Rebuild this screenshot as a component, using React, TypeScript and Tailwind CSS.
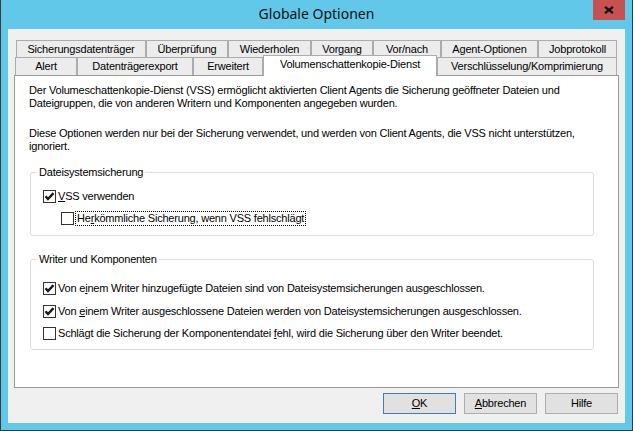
import React from "react";

type TabDef = { label: string; w: string };

const topRow: TabDef[] = [
  { label: "Sicherungsdatenträger", w: "w-[130px]" },
  { label: "Überprüfung", w: "w-[82px]" },
  { label: "Wiederholen", w: "w-[83px]" },
  { label: "Vorgang", w: "w-[62px]" },
  { label: "Vor/nach", w: "w-[68px]" },
  { label: "Agent-Optionen", w: "w-[97px]" },
  { label: "Jobprotokoll", w: "w-[79px]" },
];

const bottomRow: (TabDef & { active?: boolean })[] = [
  { label: "Alert", w: "w-[62px]" },
  { label: "Datenträgerexport", w: "w-[116px]" },
  { label: "Erweitert", w: "w-[70px]" },
  { label: "Volumenschattenkopie-Dienst", w: "w-[174px]", active: true },
  { label: "Verschlüsselung/Komprimierung", w: "w-[180px]" },
];

function Tab({ label, w, active }: TabDef & { active?: boolean }) {
  if (active) {
    return (
      <div
        className={`${w} relative z-10 h-[21px] -mb-[1px] shrink-0 border border-b-0 border-[#acacac] bg-white flex justify-center pt-[2px]`}
      >
        {label}
      </div>
    );
  }
  return (
    <div
      className={`${w} h-full shrink-0 border border-b-0 border-[#acacac] bg-[#ececec] flex items-center justify-center`}
    >
      {label}
    </div>
  );
}

function CheckBox({ checked }: { checked?: boolean }) {
  return (
    <div className="w-[13px] h-[13px] shrink-0 border border-[#333333] bg-white flex items-center justify-center">
      {checked && (
        <svg width="11" height="11" viewBox="0 0 11 11">
          <path d="M1.5 5.2 L4 8 L9.5 2.2" fill="none" stroke="#1a1a1a" strokeWidth="2.4" />
        </svg>
      )}
    </div>
  );
}

function Option({
  checked,
  children,
  className = "",
}: {
  checked?: boolean;
  children: React.ReactNode;
  className?: string;
}) {
  return (
    <div className={`flex items-center h-[13px] gap-[2px] ${className}`}>
      <CheckBox checked={checked} />
      <span className="whitespace-nowrap">{children}</span>
    </div>
  );
}

function Group({
  title,
  children,
  className = "",
}: {
  title: string;
  children: React.ReactNode;
  className?: string;
}) {
  return (
    <fieldset
      className={`ml-[1px] w-[564px] border border-[#dcdcdc] rounded-[3px] ${className}`}
    >
      <legend className="ml-[6px] px-[2px] leading-[13px]">{title}</legend>
      {children}
    </fieldset>
  );
}

function Button({ children, primary }: { children: React.ReactNode; primary?: boolean }) {
  return (
    <div
      className={`w-[73px] h-[21px] flex items-center justify-center bg-[#e1e1e1] border ${
        primary ? "border-[#3c7fb1]" : "border-[#adadad]"
      }`}
    >
      {children}
    </div>
  );
}

export default function App() {
  return (
    <div className="w-[633px] h-[431px] bg-[#62c8e9] border-x border-b border-[#3a3a3a] px-[7px] pb-[7px] flex flex-col font-['Liberation_Sans',Arial,sans-serif] text-[11px] leading-[13px] tracking-[-0.2px] text-black">
      {/* title bar */}
      <div className="h-[29px] shrink-0 grid grid-cols-[1fr_auto_1fr]">
        <div />
        <div className="self-center font-['Noto_Sans',sans-serif] text-[14px] leading-[20px] tracking-normal text-[#111] -mt-[1px]">
          Globale Optionen
        </div>
        <div className="justify-self-end self-start w-[32px] h-[20px] bg-[#c75050] flex items-center justify-center">
          <svg width="10" height="8" viewBox="0 0 10 8">
            <path d="M1 0.8 L9 7.2 M9 0.8 L1 7.2" stroke="#111" strokeWidth="2.2" />
          </svg>
        </div>
      </div>

      {/* client area */}
      <div className="flex-1 bg-[#f0f0f0] flex flex-col pt-[11px]">
        <div className="flex h-[17px] ml-[8px]">
          {topRow.map((t) => (
            <Tab key={t.label} {...t} />
          ))}
        </div>
        <div className="flex items-end h-[18px] ml-[7px]">
          {bottomRow.map((t) => (
            <Tab key={t.label} {...t} />
          ))}
        </div>

        <div className="ml-[6px] w-[605px] h-[313px] shrink-0 border border-[#9a9a9a] bg-white pt-[8px] pl-[14px]">
          <p className="whitespace-nowrap">
            Der Volumeschattenkopie-Dienst (VSS) ermöglicht aktivierten Client Agents die Sicherung geöffneter Dateien und
            <br />
            Dateigruppen, die von anderen Writern und Komponenten angegeben wurden.
          </p>
          <p className="whitespace-nowrap mt-[17px]">
            Diese Optionen werden nur bei der Sicherung verwendet, und werden von Client Agents, die VSS nicht unterstützen,
            <br />
            ignoriert.
          </p>

          <Group title="Dateisystemsicherung" className="mt-[13px] pt-[11px] pb-[10px]">
            <Option checked className="ml-[12px]">
              <u>V</u>SS verwenden
            </Option>
            <div className="flex items-center h-[13px] mt-[9px] ml-[30px]">
              <CheckBox />
              <span className="ml-[1px] px-[1px] border border-dotted border-black whitespace-nowrap leading-[13px]">
                He<u>r</u>kömmliche Sicherung, wenn VSS fehlschlägt
              </span>
            </div>
          </Group>

          <Group title="Writer und Komponenten" className="mt-[17px] pt-[16px] pb-[9px]">
            <Option checked className="ml-[12px]">
              Von e<u>i</u>nem Writer hinzugefügte Dateien sind von Dateisystemsicherungen ausgeschlossen.
            </Option>
            <Option checked className="ml-[12px] mt-[10px]">
              Von <u>e</u>inem Writer ausgeschlossene Dateien werden von Dateisystemsicherungen ausgeschlossen.
            </Option>
            <Option className="ml-[12px] mt-[9px]">
              Schlägt die Sicherung der Komponentendatei <u>f</u>ehl, wird die Sicherung über den Writer beendet.
            </Option>
          </Group>
        </div>

        <div className="flex justify-end gap-[8px] mt-[5px] pr-[7px]">
          <Button primary>
            <span>
              <u>O</u>K
            </span>
          </Button>
          <Button>
            <span>
              <u>A</u>bbrechen
            </span>
          </Button>
          <Button>Hilfe</Button>
        </div>
      </div>
    </div>
  );
}
